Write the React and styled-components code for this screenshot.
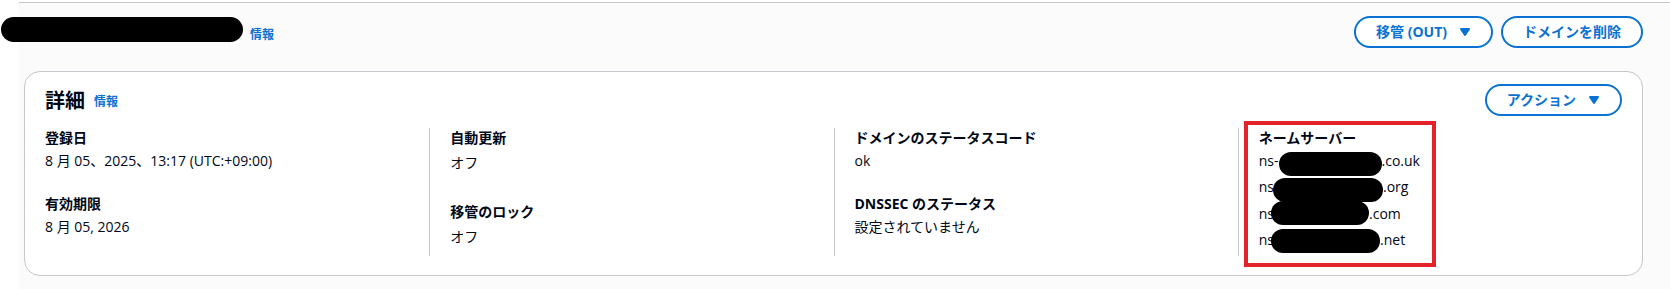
import styled, { createGlobalStyle } from 'styled-components';

const GlobalStyle = createGlobalStyle`
  html, body {
    margin: 0;
    padding: 0;
    background: #ffffff;
  }
  body {
    font-family: "Open Sans", "Noto Sans CJK JP", "Noto Sans", sans-serif;
    font-size: 14px;
    line-height: 20px;
    color: #000716;
  }
  * {
    box-sizing: border-box;
  }
`;

const Main = styled.main`
  margin: 2px 0 0 19px;
  min-height: 287px;
  border-top: 1px solid #c6c6cd;
  background: #fbfbfb;
  padding: 13px 27px 16px 5px;
`;

const PageHeader = styled.div`
  display: flex;
  justify-content: space-between;
  align-items: flex-start;
  height: 32px;
`;

const TitleRow = styled.div`
  display: flex;
  align-items: flex-start;
`;

const Redacted = styled.span`
  display: inline-block;
  background: #000;
  border-radius: ${p => p.$r || 12}px;
  width: ${p => p.$w}px;
  height: ${p => p.$h || 24}px;
  vertical-align: middle;
`;

const TitleBlob = styled(Redacted)`
  margin: 1px 0 0 -23px;
`;

const InfoLink = styled.a`
  font-size: 12px;
  line-height: 16px;
  font-weight: 700;
  color: #0972d3;
  text-decoration: none;
  margin-left: ${p => p.$ml || 8}px;
  margin-top: ${p => p.$mt || 0}px;
  cursor: pointer;
`;

const Actions = styled.div`
  display: flex;
  gap: 8px;
`;

const Button = styled.button`
  display: inline-flex;
  align-items: center;
  justify-content: center;
  height: 32px;
  padding: 0 20px;
  border: 2px solid #0972d3;
  border-radius: 20px;
  background: #ffffff;
  color: #0972d3;
  font-family: inherit;
  font-size: 14px;
  font-weight: 700;
  line-height: 20px;
  cursor: pointer;
  svg {
    margin-left: 10px;
    margin-right: -2px;
  }
`;

const Card = styled.section`
  margin-top: 23px;
  background: #ffffff;
  border: 1px solid #c6c6cd;
  border-radius: 16px;
  padding: 12px 20px 19px;
`;

const CardHeader = styled.div`
  display: flex;
  justify-content: space-between;
  align-items: center;
  height: 32px;
`;

const HeadingRow = styled.div`
  display: flex;
  align-items: center;
  padding-top: 2px;
`;

const Heading = styled.h2`
  margin: 0;
  font-size: 20px;
  line-height: 24px;
  font-weight: 700;
  color: #000716;
`;

const Columns = styled.div`
  display: grid;
  grid-template-columns: repeat(4, 1fr);
  margin: 12px -20px 0;
`;

const Column = styled.div`
  position: relative;
  display: flex;
  flex-direction: column;
  gap: ${p => p.$gap || 23}px;
  padding: 0 20px 3px;
  border-left: ${p => (p.$first ? 'none' : '1px solid #c6c6cd')};
`;

const Pair = styled.div`
  display: flex;
  flex-direction: column;
`;

const Label = styled.div`
  font-weight: 700;
  line-height: 20px;
`;

const Value = styled.div`
  margin-top: 3px;
  padding: ${p => (p.$padded ? '2px 0' : '0')};
  line-height: 20px;
`;

const NsList = styled.div`
  line-height: 25.6px;
  white-space: nowrap;
`;

const NsBlob = styled(Redacted)`
  margin: 0 0 0 ${p => p.$ml || 0}px;
  position: relative;
  top: ${p => p.$dy || 0}px;
`;

const Highlight = styled.div`
  position: absolute;
  left: 5px;
  top: -7px;
  width: 192px;
  height: 146px;
  border: 4px solid #e3222a;
  pointer-events: none;
`;

const Caret = () => (
  <svg width="16" height="16" viewBox="0 0 16 16" aria-hidden="true">
    <path d="M4 5h8l-4 6z" fill="currentColor" stroke="currentColor" strokeWidth="2" strokeLinejoin="round" />
  </svg>
);

const nameServers = [
  { pre: 'ns-', w: 103, ml: 0, dy: 2, post: '.co.uk' },
  { pre: 'ns', w: 110, ml: -1, dy: 1, post: '.org' },
  { pre: 'ns', w: 98, ml: -3, dy: -2, post: '.com' },
  { pre: 'ns', w: 109, ml: -3, dy: 0, post: '.net' },
];

export default function App() {
  return (
    <>
      <GlobalStyle />
      <Main>
        <PageHeader>
          <TitleRow>
            <TitleBlob $w={242} $h={25} $r={13} />
            <InfoLink $ml={7} $mt={11}>情報</InfoLink>
          </TitleRow>
          <Actions>
            <Button>移管 (OUT)<Caret /></Button>
            <Button>ドメインを削除</Button>
          </Actions>
        </PageHeader>

        <Card>
          <CardHeader>
            <HeadingRow>
              <Heading>詳細</Heading>
              <InfoLink $ml={9} $mt={2}>情報</InfoLink>
            </HeadingRow>
            <Button>アクション<Caret /></Button>
          </CardHeader>

          <Columns>
            <Column $first>
              <Pair>
                <Label>登録日</Label>
                <Value>8 月 05、2025、13:17 (UTC:+09:00)</Value>
              </Pair>
              <Pair>
                <Label>有効期限</Label>
                <Value>8 月 05, 2026</Value>
              </Pair>
            </Column>

            <Column $gap={27}>
              <Pair>
                <Label>自動更新</Label>
                <Value $padded>オフ</Value>
              </Pair>
              <Pair>
                <Label>移管のロック</Label>
                <Value $padded>オフ</Value>
              </Pair>
            </Column>

            <Column>
              <Pair>
                <Label>ドメインのステータスコード</Label>
                <Value>ok</Value>
              </Pair>
              <Pair>
                <Label>DNSSEC のステータス</Label>
                <Value>設定されていません</Value>
              </Pair>
            </Column>

            <Column>
              <Pair>
                <Label>ネームサーバー</Label>
                <NsList>
                  {nameServers.map((ns, i) => (
                    <div key={i}>
                      {ns.pre}
                      <NsBlob $w={ns.w} $ml={ns.ml} $dy={ns.dy} />
                      {ns.post}
                    </div>
                  ))}
                </NsList>
              </Pair>
              <Highlight />
            </Column>
          </Columns>
        </Card>
      </Main>
    </>
  );
}
